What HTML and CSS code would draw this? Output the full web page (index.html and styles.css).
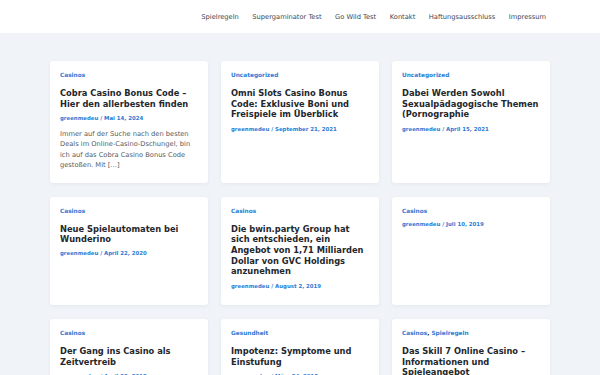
FILE: index.html
```html
<!DOCTYPE html>
<html lang="de">
<head>
<meta charset="utf-8">
<title>Blog</title>
<link rel="stylesheet" href="styles.css">
</head>
<body>
<header class="site-header">
  <nav class="main-nav">
    <a href="#">Spielregeln</a>
    <a href="#">Supergaminator Test</a>
    <a href="#">Go Wild Test</a>
    <a href="#">Kontakt</a>
    <a href="#">Haftungsausschluss</a>
    <a href="#">Impressum</a>
  </nav>
</header>
<main class="posts">
  <article class="card">
    <div class="cat"><a href="#">Casinos</a></div>
    <h2 class="title">Cobra Casino Bonus Code – Hier den allerbesten finden</h2>
    <div class="meta">greenmedeu / Mai 14, 2024</div>
    <p class="excerpt">Immer auf der Suche nach den besten Deals im Online-Casino-Dschungel, bin ich auf das Cobra Casino Bonus Code gestoßen. Mit […]</p>
  </article>
  <article class="card">
    <div class="cat"><a href="#">Uncategorized</a></div>
    <h2 class="title">Omni Slots Casino Bonus Code: Exklusive Boni und Freispiele im Überblick</h2>
    <div class="meta">greenmedeu / September 21, 2021</div>
  </article>
  <article class="card">
    <div class="cat"><a href="#">Uncategorized</a></div>
    <h2 class="title">Dabei Werden Sowohl Sexualpädagogische Themen (Pornographie</h2>
    <div class="meta">greenmedeu / April 15, 2021</div>
  </article>
  <article class="card">
    <div class="cat"><a href="#">Casinos</a></div>
    <h2 class="title">Neue Spielautomaten bei Wunderino</h2>
    <div class="meta">greenmedeu / April 22, 2020</div>
  </article>
  <article class="card">
    <div class="cat"><a href="#">Casinos</a></div>
    <h2 class="title">Die bwin.party Group hat sich entschieden, ein Angebot von 1,71 Milliarden Dollar von GVC Holdings anzunehmen</h2>
    <div class="meta">greenmedeu / August 2, 2019</div>
  </article>
  <article class="card">
    <div class="cat"><a href="#">Casinos</a></div>
    <div class="meta">greenmedeu / Juli 10, 2019</div>
  </article>
  <article class="card">
    <div class="cat"><a href="#">Casinos</a></div>
    <h2 class="title">Der Gang ins Casino als Zeitvertreib</h2>
    <div class="meta">greenmedeu / April 22, 2018</div>
  </article>
  <article class="card">
    <div class="cat"><a href="#">Gesundheit</a></div>
    <h2 class="title">Impotenz: Symptome und Einstufung</h2>
    <div class="meta">greenmedeu / März 24, 2018</div>
  </article>
  <article class="card">
    <div class="cat"><a href="#">Casinos</a>, <a href="#">Spielregeln</a></div>
    <h2 class="title">Das Skill 7 Online Casino – Informationen und Spieleangebot</h2>
    <div class="meta">greenmedeu / März 10, 2018</div>
  </article>
</main>
</body>
</html>
```
FILE: styles.css
```css
* { box-sizing: border-box; }
html, body { margin: 0; padding: 0; }
body {
  background: #f0f4f8;
  font-family: "DejaVu Sans", Verdana, sans-serif;
  color: #222;
}
a { text-decoration: none; color: inherit; }

.site-header {
  background: #fff;
  height: 33px;
  display: flex;
  justify-content: flex-end;
  align-items: center;
  padding-right: 54px;
}
.main-nav {
  display: flex;
  gap: 13.5px;
  font-size: 6.7px;
  line-height: 10px;
  color: #3f4650;
}

.posts {
  width: 500px;
  margin: 28px auto 0;
  display: grid;
  grid-template-columns: repeat(3, 1fr);
  column-gap: 13px;
  row-gap: 13.7px;
}
.card {
  background: #fff;
  border-radius: 3px;
  box-shadow: 0 1px 4px rgba(30, 50, 80, 0.06);
  padding: 10px 10px 12.5px;
}
.cat {
  font-size: 5.8px;
  line-height: 8.7px;
  font-weight: bold;
  color: #222;
}
.cat a { color: #2b7bd4; }
.title {
  margin: 8.3px 0 0;
  font-size: 8.3px;
  line-height: 10.7px;
  font-weight: bold;
  color: #23272d;
}
.meta {
  margin: 4.5px 0 3px;
  font-size: 5.4px;
  line-height: 8.1px;
  font-weight: bold;
  color: #2b7bd4;
}
.excerpt {
  margin: 7.2px 0 0;
  font-size: 6.7px;
  line-height: 10.3px;
  color: #555b62;
}
```
